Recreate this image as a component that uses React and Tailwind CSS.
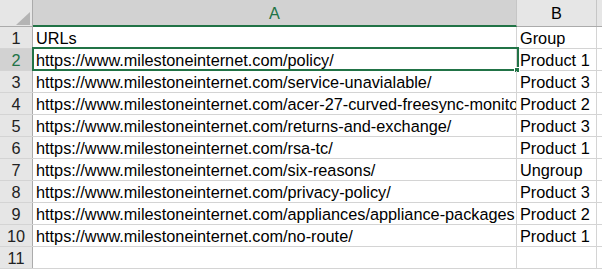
import React from 'react';

const rows = [
  ['URLs', 'Group'],
  ['https://www.milestoneinternet.com/policy/', 'Product 1'],
  ['https://www.milestoneinternet.com/service-unavialable/', 'Product 3'],
  ['https://www.milestoneinternet.com/acer-27-curved-freesync-monitor/', 'Product 2'],
  ['https://www.milestoneinternet.com/returns-and-exchange/', 'Product 3'],
  ['https://www.milestoneinternet.com/rsa-tc/', 'Product 1'],
  ['https://www.milestoneinternet.com/six-reasons/', 'Ungroup'],
  ['https://www.milestoneinternet.com/privacy-policy/', 'Product 3'],
  ['https://www.milestoneinternet.com/appliances/appliance-packages', 'Product 2'],
  ['https://www.milestoneinternet.com/no-route/', 'Product 1'],
  ['', ''],
];

const App = () => {
  return (
    <div className="w-[602px] h-[273px] overflow-hidden bg-white text-[16.3px] leading-[18px] text-black font-['Liberation_Sans',Arial,sans-serif]">
      {/* column headers */}
      <div className="flex h-[27px] bg-[#e6e6e6] border-b border-[#ababab]">
        <div className="relative w-[33px] shrink-0 border-r border-[#ababab]">
          <svg className="absolute right-[2px] bottom-[1px]" width="14" height="13" viewBox="0 0 14 13">
            <polygon points="14,0 14,13 0,13" fill="#b4b4b4" />
          </svg>
        </div>
        <div className="w-[484px] shrink-0 flex items-center justify-center bg-[#d2d2d2] text-[#217346] border-r border-[#c6c6c6] border-b-2 border-b-[#217346] -mb-px">
          A
        </div>
        <div className="w-[80px] shrink-0 flex items-center justify-center border-r border-[#c6c6c6]">B</div>
        <div className="flex-1" />
      </div>

      {rows.map(([url, group], i) => {
        const active = i === 1;
        return (
          <div key={i} className="flex h-[22px] border-b border-[#d4d4d4]">
            <div
              className={`w-[33px] shrink-0 flex items-end justify-center pb-[1px] border-r border-[#ababab] ${
                active ? 'bg-[#d2d2d2] text-[#217346]' : 'bg-[#e6e6e6] text-[#222]'
              }`}
            >
              {i + 1}
            </div>
            <div className="relative w-[484px] shrink-0 flex items-end pl-[3px] pb-[1px] border-r border-[#d4d4d4] whitespace-nowrap overflow-hidden">
              {url}
            </div>
            <div className="relative w-[80px] shrink-0 flex items-end pl-[3px] pb-[1px] border-r border-[#d4d4d4] whitespace-nowrap">
              {group}
              {active && (
                <>
                  <div className="absolute left-[-485px] top-[-2px] w-[487px] h-[24px] border-2 border-[#217346] pointer-events-none" />
                  <div className="absolute left-[-3px] top-[18px] w-[6px] h-[6px] bg-[#217346] border border-white" />
                </>
              )}
            </div>
            <div className="flex-1" />
          </div>
        );
      })}
    </div>
  );
};

export default App;
